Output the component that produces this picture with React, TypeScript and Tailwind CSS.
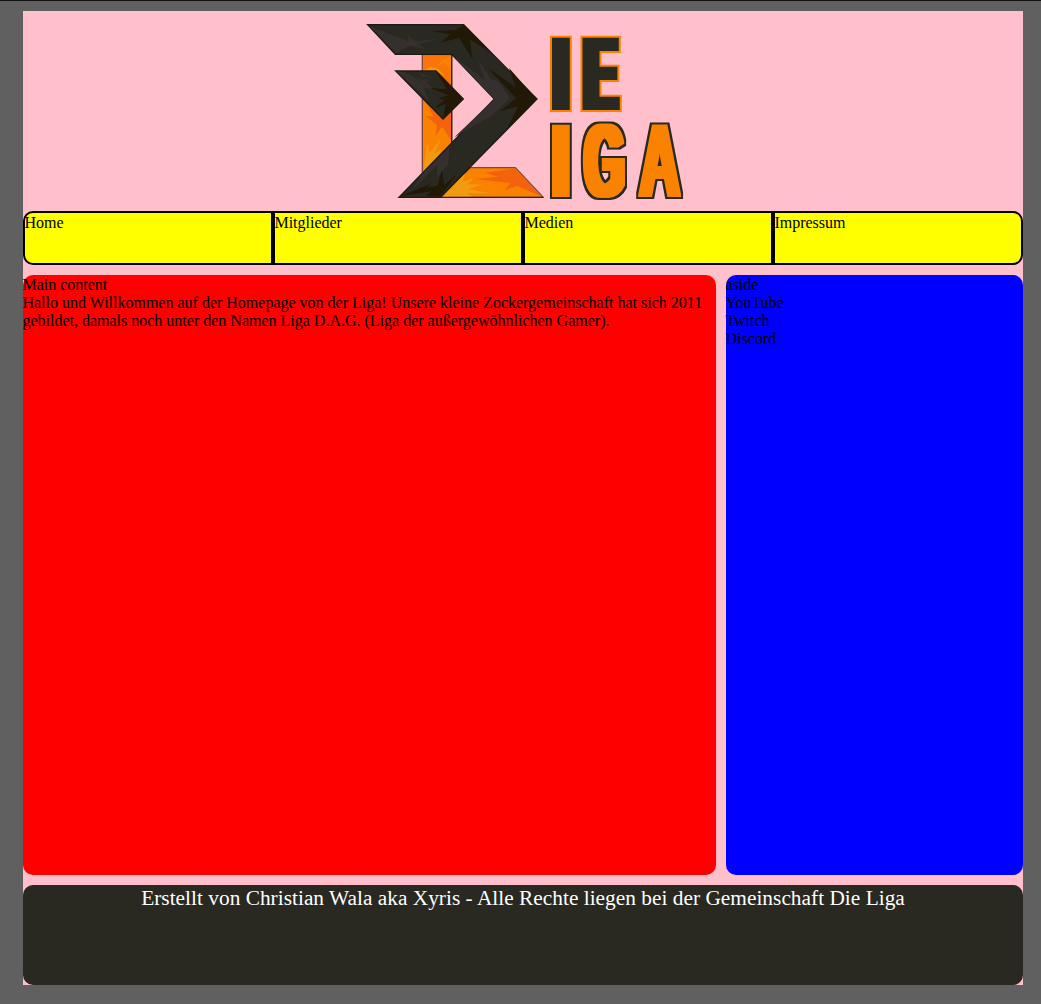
type LetterProps = {
  char: string;
  x: number;
  baseline: number;
  sx: number;
  fill: string;
  filter: string;
};

function Letter({ char, x, baseline, sx, fill, filter }: LetterProps) {
  return (
    <g filter={`url(#${filter})`}>
      <text
        transform={`translate(${x} ${baseline}) scale(${sx} 1)`}
        className="font-['Liberation_Sans',sans-serif] text-[307px] leading-none font-bold"
        fill={fill}
      >
        {char}
      </text>
    </g>
  );
}

type BlockFilterProps = { id: string; body: string; edge: string; outline: string };

/* Thickens a letter into a block shape and adds a contrasting edge around it. */
function BlockFilter({ id, body, edge, outline }: BlockFilterProps) {
  return (
    <filter
      id={id}
      filterUnits="userSpaceOnUse"
      x="560"
      y="40"
      width="460"
      height="560"
      colorInterpolationFilters="sRGB"
    >
      <feMorphology in="SourceGraphic" operator="dilate" radius={body} result="body" />
      <feMorphology in="SourceAlpha" operator="dilate" radius={edge} result="edge" />
      <feFlood floodColor={outline} />
      <feComposite in2="edge" operator="in" result="outline" />
      <feMerge>
        <feMergeNode in="outline" />
        <feMergeNode in="body" />
      </feMerge>
    </filter>
  );
}

const DARK = "#292821";
const ORANGE = "#f98200";

function Logo() {
  return (
    <svg
      className="h-[200px] w-[336px] overflow-visible"
      viewBox="0 3 1008 600"
      role="img"
      aria-label="Die Liga"
    >
      <defs>
        <BlockFilter id="dark-narrow" body="9 3" edge="15 9" outline={ORANGE} />
        <BlockFilter id="dark-wide" body="15 3" edge="21 9" outline={ORANGE} />
        <BlockFilter id="orange-narrow" body="9 3" edge="15 9" outline={DARK} />
        <BlockFilter id="orange-wide" body="12 3" edge="18 9" outline={DARK} />
      </defs>
      <g strokeWidth="4" strokeLinejoin="round">
        <path d="M202 134H290V420L202 500Z" fill={ORANGE} stroke="#7d493a" />
        <path d="M205 137H286L277 145 240 156 263 151 242 171 270 158 286 183V230L245 184 205 178Z" fill="#f97508" />
        <path d="M205 181L226 172 248 176 270 198 246 184Z" fill="#f39a10" />
        <path d="M212 277L288 295V390L261 350 241 379 246 345 212 317 236 320Z" fill="#f5620e" />
        <path d="M205 484L217 394 223 429 258 386 239 431 263 414 244 445Z" fill="#f39a10" />
        <path d="M290 134V410" stroke={DARK} />
        <path d="M258 562L345 473H481L565 562Z" fill={ORANGE} stroke="#7d493a" />
        <path d="M390 488L480 476 557 558 487 528 448 541 467 519 360 507 430 500Z" fill="#f5620e" />
        <path d="M262 560L330 490 324 514 356 507 337 523 380 524 340 538 408 550 337 549 350 560Z" fill="#f39a10" />
        <path d="M256 562H565" stroke={DARK} />
      </g>

      <path d="M38 44H326L546 267 256 562H132L418 267 290 133H121Z" fill={DARK} stroke="#201b11" strokeWidth="4" />
      <path d="M44 48L160 94 158 74 180 94 247 86 190 103 212 117 165 107 124 129Z" fill="#35302e" />
      <path d="M326 46L410 130 345 88 352 146 313 84 258 97 286 73 232 64 300 60Z" fill="#211806" />
      <path d="M295 138L390 210 368 149 408 207 430 214 464 264 412 316 298 382 418 267Z" fill="#35302e" />
      <path d="M400 175L482 232 462 174 544 267 456 357 490 288 435 304 483 265Z" fill="#211806" />
      <path d="M204 490L284 410 279 463 245 505 247 466 170 541 187 516Z" fill="#35302e" />
      <path d="M136 559L226 522 218 533 249 526 260 480 268 525 306 492 256 559 213 558 229 544Z" fill="#211806" />

      <path d="M122 183H243L325 267 264 327Z" fill={DARK} stroke="#201b11" strokeWidth="4" />
      <path d="M127 185H150L220 231 179 202 233 219 196 197 236 204 193 188 235 240 205 232 222 273Z" fill="#35302e" />
      <path d="M243 185L323 267 265 325 272 281 240 294 269 269 249 265 282 256 225 234 276 238Z" fill="#211806" />

      <Letter char="I" x={583.7} baseline={297} sx={0.8} fill={DARK} filter="dark-narrow" />
      <Letter char="E" x={688} baseline={297} sx={0.475} fill={DARK} filter="dark-wide" />
      <Letter char="I" x={583.7} baseline={559} sx={0.8} fill={ORANGE} filter="orange-narrow" />
      <Letter char="G" x={689} baseline={558} sx={0.495} fill={ORANGE} filter="orange-wide" />
      <Letter char="A" x={854} baseline={559} sx={0.54} fill={ORANGE} filter="orange-narrow" />
    </svg>
  );
}

export default function App() {
  return (
    <div className="h-[1004px] overflow-hidden border-t border-[#111111] bg-[#606060] pt-[10px] pl-[23px] font-['Liberation_Serif',serif] text-base leading-[18px] text-black">
      <div className="flex w-[1000px] flex-col gap-[10px] bg-[#ffc0cb]">
        <div>
          <header className="flex h-[200px] justify-center">
            <Logo />
          </header>
          <nav className="grid h-[54px] grid-cols-4 *:border-2 *:border-black *:bg-[#ffff00] *:pt-px *:-indent-[0.6px]">
            <a className="rounded-l-[10px]">Home</a>
            <a>Mitglieder</a>
            <a>Medien</a>
            <a className="rounded-r-[10px]">Impressum</a>
          </nav>
        </div>
        <div className="flex h-[600px] gap-[10px]">
          <main className="w-[693px] rounded-[10px] bg-[#ff0000] pt-px">
            <p className="-ml-[0.6px]">Main content</p>
            <p className="-ml-[0.6px]">
              Hallo und Willkommen auf der Homepage von der Liga! Unsere kleine Zockergemeinschaft hat sich 2011
              gebildet, damals noch unter den Namen Liga D.A.G. (Liga der außergewöhnlichen Gamer).
            </p>
          </main>
          <aside className="flex-1 rounded-[10px] bg-[#0000ff] pt-px *:-ml-[0.6px]">
            <p>aside</p>
            <p>YouTube</p>
            <p>Twitch</p>
            <p>Discord</p>
          </aside>
        </div>
        <footer className="h-[100px] rounded-[10px] bg-[#292821] pt-px text-center text-[21.33px] leading-6 tracking-[0.02px] text-white">
          Erstellt von Christian Wala aka Xyris - Alle Rechte liegen bei der Gemeinschaft Die Liga
        </footer>
      </div>
    </div>
  );
}
